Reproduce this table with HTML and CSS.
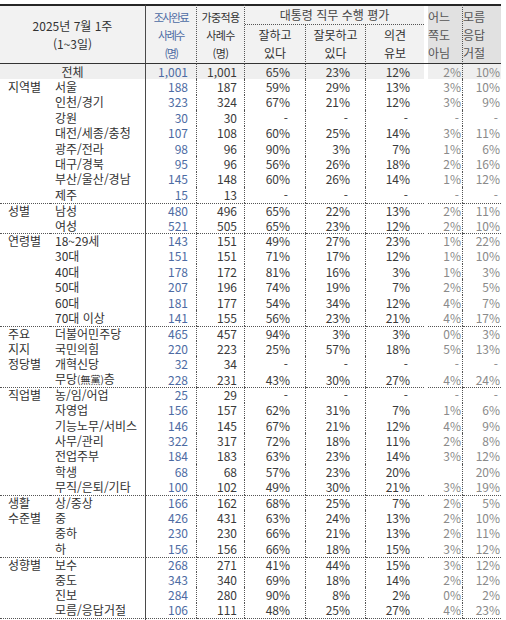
FILE: index.html
```html
<!DOCTYPE html>
<html lang="ko">
<head>
<meta charset="utf-8">
<title>대통령 직무 수행 평가</title>
<link rel="stylesheet" href="styles.css">
</head>
<body>
<div class="sheet">
<table class="poll">
<colgroup>
<col class="w1"><col class="w2"><col class="w3"><col class="w4"><col class="w5"><col class="w6"><col class="w7"><col class="wx"><col class="w8"><col class="w9">
</colgroup>
<thead>
<tr class="h1">
<th class="hd title" colspan="2" rowspan="2">2025년 7월 1주<br>(1~3일)</th>
<th class="hd ha" rowspan="2">조사완료<br>사례수<br>(명)</th>
<th class="hd hb" rowspan="2">가중적용<br>사례수<br>(명)</th>
<th class="hd hmain" colspan="3">대통령 직무 수행 평가</th>
<th class="hx" rowspan="2"></th>
<th class="hq hq1" rowspan="2">어느<br>쪽도<br>아님</th>
<th class="hq hq2" rowspan="2">모름<br>응답<br>거절</th>
</tr>
<tr class="h2">
<th class="hd hs hs1">잘하고<br>있다</th>
<th class="hd hs hs2">잘못하고<br>있다</th>
<th class="hd hs hs3">의견<br>유보</th>
</tr>
</thead>
<tbody>
<tr class="total"><td class="t" colspan="2">전체</td><td class="a">1,001</td><td class="b">1,001</td><td class="p1">65%</td><td class="p2">23%</td><td class="p3">12%</td><td class="x"></td><td class="q1">2%</td><td class="q2">10%</td></tr>
<tr><td class="g">지역별</td><td class="l">서울</td><td class="a">188</td><td class="b">187</td><td class="p1">59%</td><td class="p2">29%</td><td class="p3">13%</td><td class="x"></td><td class="q1">3%</td><td class="q2">10%</td></tr>
<tr><td class="g"></td><td class="l">인천/경기</td><td class="a">323</td><td class="b">324</td><td class="p1">67%</td><td class="p2">21%</td><td class="p3">12%</td><td class="x"></td><td class="q1">3%</td><td class="q2">9%</td></tr>
<tr><td class="g"></td><td class="l">강원</td><td class="a">30</td><td class="b">30</td><td class="p1 d">-</td><td class="p2 d">-</td><td class="p3 d">-</td><td class="x"></td><td class="q1 d">-</td><td class="q2 d">-</td></tr>
<tr><td class="g"></td><td class="l">대전/세종/충청</td><td class="a">107</td><td class="b">108</td><td class="p1">60%</td><td class="p2">25%</td><td class="p3">14%</td><td class="x"></td><td class="q1">3%</td><td class="q2">11%</td></tr>
<tr><td class="g"></td><td class="l">광주/전라</td><td class="a">98</td><td class="b">96</td><td class="p1">90%</td><td class="p2">3%</td><td class="p3">7%</td><td class="x"></td><td class="q1">1%</td><td class="q2">6%</td></tr>
<tr><td class="g"></td><td class="l">대구/경북</td><td class="a">95</td><td class="b">96</td><td class="p1">56%</td><td class="p2">26%</td><td class="p3">18%</td><td class="x"></td><td class="q1">2%</td><td class="q2">16%</td></tr>
<tr><td class="g"></td><td class="l">부산/울산/경남</td><td class="a">145</td><td class="b">148</td><td class="p1">60%</td><td class="p2">26%</td><td class="p3">14%</td><td class="x"></td><td class="q1">1%</td><td class="q2">12%</td></tr>
<tr><td class="g"></td><td class="l">제주</td><td class="a">15</td><td class="b">13</td><td class="p1 d">-</td><td class="p2 d">-</td><td class="p3 d">-</td><td class="x"></td><td class="q1 d">-</td><td class="q2 d">-</td></tr>
<tr class="sep"><td class="g">성별</td><td class="l">남성</td><td class="a">480</td><td class="b">496</td><td class="p1">65%</td><td class="p2">22%</td><td class="p3">13%</td><td class="x"></td><td class="q1">2%</td><td class="q2">11%</td></tr>
<tr><td class="g"></td><td class="l">여성</td><td class="a">521</td><td class="b">505</td><td class="p1">65%</td><td class="p2">23%</td><td class="p3">12%</td><td class="x"></td><td class="q1">2%</td><td class="q2">10%</td></tr>
<tr class="sep"><td class="g">연령별</td><td class="l">18~29세</td><td class="a">143</td><td class="b">151</td><td class="p1">49%</td><td class="p2">27%</td><td class="p3">23%</td><td class="x"></td><td class="q1">1%</td><td class="q2">22%</td></tr>
<tr><td class="g"></td><td class="l">30대</td><td class="a">151</td><td class="b">151</td><td class="p1">71%</td><td class="p2">17%</td><td class="p3">12%</td><td class="x"></td><td class="q1">1%</td><td class="q2">10%</td></tr>
<tr><td class="g"></td><td class="l">40대</td><td class="a">178</td><td class="b">172</td><td class="p1">81%</td><td class="p2">16%</td><td class="p3">3%</td><td class="x"></td><td class="q1">1%</td><td class="q2">3%</td></tr>
<tr><td class="g"></td><td class="l">50대</td><td class="a">207</td><td class="b">196</td><td class="p1">74%</td><td class="p2">19%</td><td class="p3">7%</td><td class="x"></td><td class="q1">2%</td><td class="q2">5%</td></tr>
<tr><td class="g"></td><td class="l">60대</td><td class="a">181</td><td class="b">177</td><td class="p1">54%</td><td class="p2">34%</td><td class="p3">12%</td><td class="x"></td><td class="q1">4%</td><td class="q2">7%</td></tr>
<tr><td class="g"></td><td class="l">70대 이상</td><td class="a">141</td><td class="b">155</td><td class="p1">56%</td><td class="p2">23%</td><td class="p3">21%</td><td class="x"></td><td class="q1">4%</td><td class="q2">17%</td></tr>
<tr class="sep"><td class="g">주요</td><td class="l">더불어민주당</td><td class="a">465</td><td class="b">457</td><td class="p1">94%</td><td class="p2">3%</td><td class="p3">3%</td><td class="x"></td><td class="q1">0%</td><td class="q2">3%</td></tr>
<tr><td class="g">지지</td><td class="l">국민의힘</td><td class="a">220</td><td class="b">223</td><td class="p1">25%</td><td class="p2">57%</td><td class="p3">18%</td><td class="x"></td><td class="q1">5%</td><td class="q2">13%</td></tr>
<tr><td class="g">정당별</td><td class="l">개혁신당</td><td class="a">32</td><td class="b">34</td><td class="p1 d">-</td><td class="p2 d">-</td><td class="p3 d">-</td><td class="x"></td><td class="q1 d">-</td><td class="q2 d">-</td></tr>
<tr><td class="g"></td><td class="l">무당<span class="hanja">(無黨)</span>층</td><td class="a">228</td><td class="b">231</td><td class="p1">43%</td><td class="p2">30%</td><td class="p3">27%</td><td class="x"></td><td class="q1">4%</td><td class="q2">24%</td></tr>
<tr class="sep"><td class="g">직업별</td><td class="l">농/임/어업</td><td class="a">25</td><td class="b">29</td><td class="p1 d">-</td><td class="p2 d">-</td><td class="p3 d">-</td><td class="x"></td><td class="q1 d">-</td><td class="q2 d">-</td></tr>
<tr><td class="g"></td><td class="l">자영업</td><td class="a">156</td><td class="b">157</td><td class="p1">62%</td><td class="p2">31%</td><td class="p3">7%</td><td class="x"></td><td class="q1">1%</td><td class="q2">6%</td></tr>
<tr><td class="g"></td><td class="l">기능노무/서비스</td><td class="a">146</td><td class="b">145</td><td class="p1">67%</td><td class="p2">21%</td><td class="p3">12%</td><td class="x"></td><td class="q1">4%</td><td class="q2">9%</td></tr>
<tr><td class="g"></td><td class="l">사무/관리</td><td class="a">322</td><td class="b">317</td><td class="p1">72%</td><td class="p2">18%</td><td class="p3">11%</td><td class="x"></td><td class="q1">2%</td><td class="q2">8%</td></tr>
<tr><td class="g"></td><td class="l">전업주부</td><td class="a">184</td><td class="b">183</td><td class="p1">63%</td><td class="p2">23%</td><td class="p3">14%</td><td class="x"></td><td class="q1">3%</td><td class="q2">12%</td></tr>
<tr><td class="g"></td><td class="l">학생</td><td class="a">68</td><td class="b">68</td><td class="p1">57%</td><td class="p2">23%</td><td class="p3">20%</td><td class="x"></td><td class="q1"></td><td class="q2">20%</td></tr>
<tr><td class="g"></td><td class="l">무직/은퇴/기타</td><td class="a">100</td><td class="b">102</td><td class="p1">49%</td><td class="p2">30%</td><td class="p3">21%</td><td class="x"></td><td class="q1">3%</td><td class="q2">19%</td></tr>
<tr class="sep"><td class="g">생활</td><td class="l">상/중상</td><td class="a">166</td><td class="b">162</td><td class="p1">68%</td><td class="p2">25%</td><td class="p3">7%</td><td class="x"></td><td class="q1">2%</td><td class="q2">5%</td></tr>
<tr><td class="g">수준별</td><td class="l">중</td><td class="a">426</td><td class="b">431</td><td class="p1">63%</td><td class="p2">24%</td><td class="p3">13%</td><td class="x"></td><td class="q1">2%</td><td class="q2">10%</td></tr>
<tr><td class="g"></td><td class="l">중하</td><td class="a">230</td><td class="b">230</td><td class="p1">66%</td><td class="p2">21%</td><td class="p3">13%</td><td class="x"></td><td class="q1">2%</td><td class="q2">11%</td></tr>
<tr><td class="g"></td><td class="l">하</td><td class="a">156</td><td class="b">156</td><td class="p1">66%</td><td class="p2">18%</td><td class="p3">15%</td><td class="x"></td><td class="q1">3%</td><td class="q2">12%</td></tr>
<tr class="sep"><td class="g">성향별</td><td class="l">보수</td><td class="a">268</td><td class="b">271</td><td class="p1">41%</td><td class="p2">44%</td><td class="p3">15%</td><td class="x"></td><td class="q1">3%</td><td class="q2">12%</td></tr>
<tr><td class="g"></td><td class="l">중도</td><td class="a">343</td><td class="b">340</td><td class="p1">69%</td><td class="p2">18%</td><td class="p3">14%</td><td class="x"></td><td class="q1">2%</td><td class="q2">12%</td></tr>
<tr><td class="g"></td><td class="l">진보</td><td class="a">284</td><td class="b">280</td><td class="p1">90%</td><td class="p2">8%</td><td class="p3">2%</td><td class="x"></td><td class="q1">0%</td><td class="q2">2%</td></tr>
<tr><td class="g"></td><td class="l">모름/응답거절</td><td class="a">106</td><td class="b">111</td><td class="p1">48%</td><td class="p2">25%</td><td class="p3">27%</td><td class="x"></td><td class="q1">4%</td><td class="q2">23%</td></tr>
<tr class="sep tail"><td class="g"></td><td class="l"></td><td class="a"></td><td class="b"></td><td class="p1"></td><td class="p2"></td><td class="p3"></td><td class="x"></td><td class="q1"></td><td class="q2"></td></tr>
</tbody>
</table>
</div>
</body>
</html>
```

FILE: styles.css
```css
* {
  box-sizing: border-box;
}

html,
body {
  margin: 0;
  padding: 0;
  background: #ffffff;
}

body {
  font-family: "Noto Sans CJK KR", "Noto Sans", sans-serif;
  font-size: 12px;
  color: #333333;
}

.sheet {
  padding-top: 4px;
  width: 501px;
}

.poll {
  border-collapse: separate;
  border-spacing: 0;
  table-layout: fixed;
  width: 501px;
}

.w1 { width: 50px; }
.w2 { width: 96px; }
.w3 { width: 51px; }
.w4 { width: 48px; }
.w5 { width: 61px; }
.w6 { width: 60px; }
.w7 { width: 58px; }
.wx { width: 4px; }
.w8 { width: 35px; }
.w9 { width: 38px; }

/* ---------- header ---------- */
.poll th {
  font-weight: normal;
  padding: 0;
  line-height: 18px;
  vertical-align: middle;
  white-space: nowrap;
  overflow: hidden;
}

.h1 {
  height: 18px;
}

.h2 {
  height: 39px;
}

.h1 th {
  border-top: 2px solid #262626;
}

.hd {
  background: #f2f2f2;
  text-align: center;
}

.h1 th[rowspan],
.h2 th {
  border-bottom: 1px solid #333333;
}

.title {
  border-right: 1px solid #4a4a4a;
  color: #333333;
}

.ha {
  color: #4d6ba3;
  font-size: 11px;
  letter-spacing: -1.5px;
  border-right: 1px dotted #555555;
}

.hb {
  color: #333333;
  font-size: 11px;
  letter-spacing: -0.6px;
  border-right: 1px dotted #555555;
}

.hmain {
  line-height: 15px;
  color: #444444;
  border-bottom: 1px dotted #555555;
  vertical-align: middle;
}

.hs {
  padding-top: 2px;
  vertical-align: top;
}

.hs1,
.hs2 {
  border-right: 1px dotted #555555;
}

.hx {
  background: #ffffff;
}

.hq {
  background: #e1e1e1;
  color: #555555;
  text-align: left;
}

.hq1 {
  padding-left: 2px;
  border-right: 1px dotted #555555;
}

.hq2 {
  padding-left: 3px;
}

/* ---------- body ---------- */
.poll tbody tr {
  height: 15.4px;
}

.poll td {
  padding: 0;
  line-height: 14px;
  white-space: nowrap;
  text-align: right;
  vertical-align: middle;
  color: #3a3a3a;
}

.poll .g {
  text-align: left;
  padding-left: 8px;
  color: #333333;
}

.poll .l {
  text-align: left;
  padding-left: 5px;
  color: #333333;
  border-right: 1px solid #4a4a4a;
}

.poll .t {
  text-align: center;
  color: #333333;
  border-right: 1px solid #4a4a4a;
}

.hanja {
  font-size: 10px;
}

.poll .a {
  color: #4d6ba3;
  padding-right: 8px;
  border-right: 1px dotted #555555;
}

.poll .b {
  padding-right: 7px;
  border-right: 1px dotted #555555;
}

.poll .p1 {
  padding-right: 15px;
  border-right: 1px dotted #555555;
}

.poll .p2 {
  padding-right: 15px;
  border-right: 1px dotted #555555;
}

.poll .p3 {
  padding-right: 14px;
}

.poll .q1 {
  color: #8a8a8a;
  padding-right: 1px;
  border-right: 1px dotted #555555;
}

.poll .q2 {
  color: #8a8a8a;
  padding-right: 1px;
}

.poll .p1.d,
.poll .p2.d {
  padding-right: 17px;
}

.poll .p3.d {
  padding-right: 16px;
}

.poll .q1.d,
.poll .q2.d {
  padding-right: 3px;
}

.total td {
  background: #efefef;
}

.total td.x {
  background: #ffffff;
}

.sep td {
  border-top: 1px dotted #555555;
}

.sep td.x {
  border-top: 0;
}
```
